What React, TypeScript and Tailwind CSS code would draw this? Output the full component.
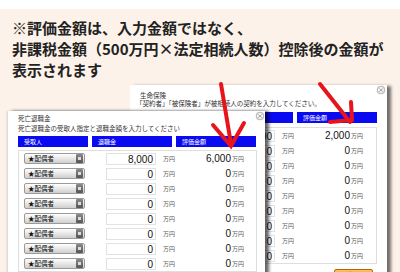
import React from 'react';

const jp = "font-['Noto_Sans_CJK_JP',sans-serif]";
const num = "font-['Liberation_Sans','Noto_Sans_CJK_JP',sans-serif]";

const CloseButton: React.FC = () => (
    <div className="w-[8px] h-[8px] rounded-full bg-white border border-[#bbb] shadow-[0_0_1px_rgba(0,0,0,0.4)] flex items-center justify-center text-[6px] leading-none text-[#444]">
        ×
    </div>
);

const HeaderBar: React.FC<{ label?: string }> = ({ label }) => (
    <div className="h-[11px] bg-[#0a0af2] text-white text-[6px] leading-[11px] pl-[6px] whitespace-nowrap">
        {label}
    </div>
);

const Select: React.FC = () => (
    <div className="ml-[5px] w-[61px] h-[11px] rounded-[2px] border border-[#9a9a9a] bg-gradient-to-b from-white to-[#cfcfcf] flex items-center justify-between">
        <span className="pl-[3px] text-[6.5px] leading-none text-[#111] whitespace-nowrap">★配偶者</span>
        <span className="w-[7px] h-[9px] mr-[1px] rounded-[1px] bg-gradient-to-b from-[#8a8a8a] to-[#555] flex items-center justify-center">
            <span className="w-[3px] h-[3px] bg-[#ddd]" />
        </span>
    </div>
);

const Amount: React.FC<{ value: string }> = ({ value }) => (
    <div className="flex items-center whitespace-nowrap min-w-0">
        <div className={`flex-none ml-[13px] w-[50px] h-[12px] bg-white border border-[#e2e2e2] text-right pr-[2px] text-[10px] leading-[11px] text-[#111] ${num}`}>
            {value}
        </div>
        <span className="flex-none ml-[7px] text-[6px] leading-none text-[#555]">万円</span>
    </div>
);

const Valuation: React.FC<{ value: string }> = ({ value }) => (
    <div className="flex items-center justify-end pr-[13px] whitespace-nowrap">
        <span className={`text-[10px] leading-none text-[#111] ${num}`}>{value}</span>
        <span className="ml-[1px] text-[6px] leading-none text-[#555]">万円</span>
    </div>
);

const frontRows = ['8,000', '0', '0', '0', '0', '0', '0', '0'];
const frontValues = ['6,000', '0', '0', '0', '0', '0', '0', '0'];
const backValues = ['2,000', '0', '0', '0', '0', '0', '0', '0', '0'];

const Arrows: React.FC = () => (
    <svg className="absolute inset-0 pointer-events-none" width="400" height="272" viewBox="0 0 400 272">
        <g stroke="#e8141b" strokeWidth="4" strokeLinecap="round" fill="none">
            <line x1="221" y1="84" x2="231" y2="144" />
            <polyline points="213,125 231,146 244,123" strokeLinejoin="miter" />
            <line x1="320" y1="84" x2="350" y2="122" />
            <polyline points="330,122 352,120 351,102" strokeLinejoin="miter" />
        </g>
    </svg>
);

export default function App() {
    return (
        <div className={`relative w-[400px] h-[272px] overflow-hidden bg-[#fcf2e9] ${jp}`}>
            <div className="h-[9px] bg-white" />
            <p className="pl-[12px] pt-[8px] text-[15px] leading-[21px] font-bold text-[#222] whitespace-nowrap">
                ※評価金額は、入力金額ではなく、<br />
                非課税金額（500万円×法定相続人数）控除後の金額が<br />
                表示されます
            </p>

            {/* Back window - 生命保険 */}
            <div className="absolute left-[130px] top-[85px] w-[257px] h-[200px] bg-white shadow-[4px_1px_3px_rgba(0,0,0,0.55)]">
                <div className="absolute right-[2px] top-[1px]">
                    <CloseButton />
                </div>
                <div className="pl-[10px] pr-[10px] pt-[6px]">
                    <div className="text-[6.5px] leading-[8px] text-[#333]">生命保険</div>
                    <div className="text-[6.5px] leading-[9px] text-[#333] -ml-[4px] whitespace-nowrap">
                        「契約者」「被保険者」が被相続人の契約を入力してください。
                    </div>
                    <div className="mt-[4px] grid grid-cols-[1fr_80px_80px] gap-x-[4px]">
                        <HeaderBar label="契約者" />
                        <HeaderBar label="金額" />
                        <HeaderBar label="評価金額" />
                    </div>
                    <div className="mt-[4px] border border-[#dedede] flex flex-col">
                        {backValues.map((v, i) => (
                            <div key={i} className="h-[15px] grid grid-cols-[1fr_80px_80px] gap-x-[4px] items-center">
                                <Select />
                                <Amount value={i === 0 ? '8,000' : '0'} />
                                <Valuation value={v} />
                            </div>
                        ))}
                    </div>
                    <div className="flex justify-end pr-[4px] mt-[5px]">
                        <div className="w-[39px] h-[13px] rounded-[2px] border border-[#c0620a] bg-gradient-to-b from-[#fbc15a] to-[#e88a1c] text-[8px] font-bold leading-[12px] text-center text-[#3a1a00]">
                            決定
                        </div>
                    </div>
                </div>
            </div>

            {/* Front window - 死亡退職金 */}
            <div className="absolute left-[8px] top-[111px] w-[257px] h-[180px] bg-white shadow-[4px_0_3px_rgba(0,0,0,0.6),-1px_0_2px_rgba(0,0,0,0.15)]">
                <div className="absolute right-[1px] top-[1px]">
                    <CloseButton />
                </div>
                <div className="pl-[10px] pr-[8px] pt-[3px]">
                    <div className="text-[6.5px] leading-[8px] text-[#333]">死亡退職金</div>
                    <div className="mt-[2px] text-[6.5px] leading-[9px] text-[#333] whitespace-nowrap">
                        死亡退職金の受取人指定と退職金額を入力してください
                    </div>
                    <div className="mt-[3px] grid grid-cols-[70px_80px_80px] gap-x-[4px]">
                        <HeaderBar label="受取人" />
                        <HeaderBar label="退職金" />
                        <HeaderBar label="評価金額" />
                    </div>
                    <div className="mt-[3px] border border-[#dedede] flex flex-col">
                        {frontRows.map((v, i) => (
                            <div key={i} className="h-[15px] grid grid-cols-[70px_80px_80px] gap-x-[4px] items-center">
                                <Select />
                                <Amount value={v} />
                                <Valuation value={frontValues[i]} />
                            </div>
                        ))}
                    </div>
                </div>
            </div>

            <Arrows />
        </div>
    );
}
